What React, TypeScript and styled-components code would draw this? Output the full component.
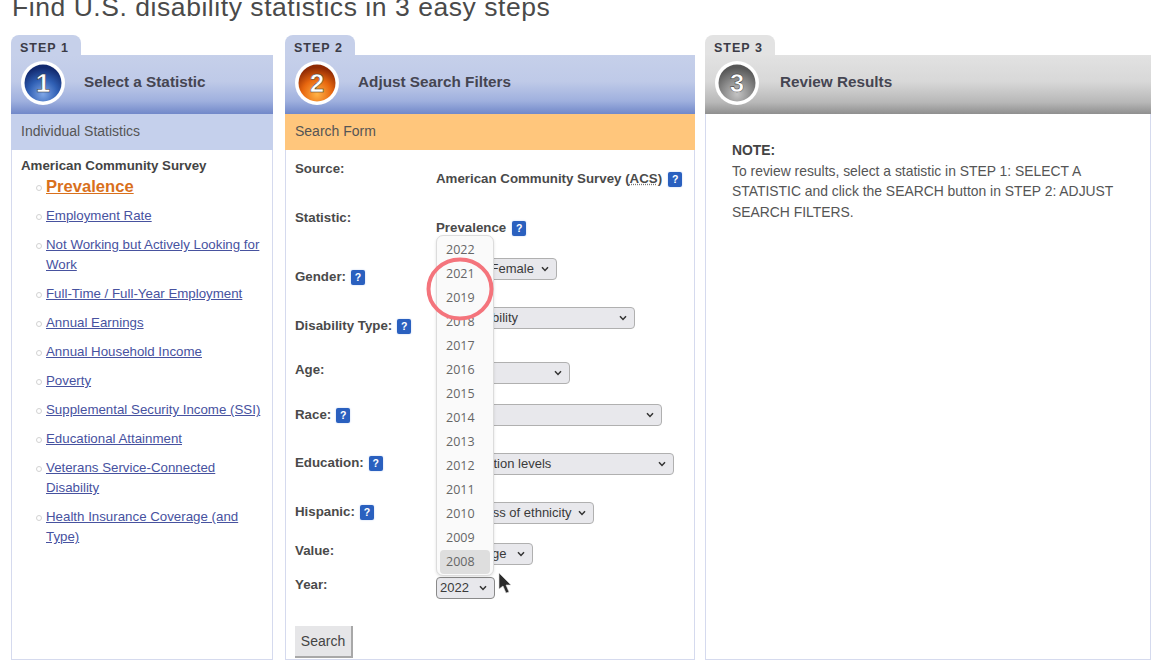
import React from "react";
import styled, { createGlobalStyle } from "styled-components";

const Global = createGlobalStyle`
  html, body { margin: 0; padding: 0; background: #fff; overflow: hidden; }
  body { font-family: "Liberation Sans", Arial, sans-serif; color: #444; }
`;

const chevron =
  "data:image/svg+xml,%3Csvg xmlns='http://www.w3.org/2000/svg' width='8' height='6' viewBox='0 0 8 6'%3E%3Cpath d='M1 1.2 L4 4.4 L7 1.2' fill='none' stroke='%23333' stroke-width='1.5'/%3E%3C/svg%3E";

const Page = styled.div`
  width: 1160px;
  height: 672px;
  overflow: hidden;
`;
const Title = styled.h1`
  margin: 0;
  height: 35px;
  padding-left: 12px;
  font-size: 26.5px;
  font-weight: 400;
  line-height: 14px;
  letter-spacing: 0.55px;
  color: #4a4a4a;
`;
const Columns = styled.div`
  display: flex;
  margin-left: 11px;
`;
const Column = styled.section<{ $w: number; $after?: number }>`
  display: flex;
  flex-direction: column;
  flex: none;
  width: ${(p) => p.$w}px;
  height: 625px;
  margin-right: ${(p) => p.$after ?? 0}px;
`;
const Tab = styled.div<{ $grey?: boolean }>`
  box-sizing: border-box;
  width: 70px;
  height: 20px;
  padding: 6px 0 0 9px;
  border-radius: 8px 8px 0 0;
  background: ${(p) => (p.$grey ? "#e3e3e3" : "#c6d0ea")};
  font-size: 12.5px;
  line-height: 14px;
  font-weight: 700;
  letter-spacing: 1px;
  color: #3b3b46;
`;
const Header = styled.header<{ $grey?: boolean; $gap?: number }>`
  display: flex;
  align-items: center;
  gap: ${(p) => p.$gap ?? 18}px;
  height: 59px;
  padding-left: 9px;
  padding-bottom: 3px;
  box-sizing: border-box;
  background: ${(p) =>
    p.$grey
      ? "linear-gradient(#e2e2e2 0%, #d8d8d8 45%, #b8b8b8 80%, #8f8f8f 100%)"
      : "linear-gradient(#c6d0ea 0%, #bfcae8 45%, #9fb0de 78%, #7188c9 100%)"};
`;
const HeaderTitle = styled.h2`
  margin: 0 0 2px;
  font-size: 15.3px;
  line-height: 18px;
  font-weight: 700;
  color: #454552;
`;
const SubBar = styled.div<{ $orange?: boolean }>`
  height: 36px;
  padding-left: 10px;
  background: ${(p) => (p.$orange ? "#ffc67c" : "#c5d0ec")};
  font-size: 14px;
  line-height: 34px;
  color: #555;
`;
const Body = styled.div`
  flex: 1;
  box-sizing: border-box;
  border: 1px solid #d5daee;
  border-top: 0;
`;
const ListBody = styled(Body)`
  padding: 8px 0 0 9px;
`;
const GroupTitle = styled.div`
  margin-bottom: 3px;
  font-size: 13.3px;
  font-weight: 700;
  line-height: 16px;
  color: #444;
`;
const List = styled.ul`
  margin: 0;
  padding: 0 8px 0 25px;
  list-style: none;
`;
const Item = styled.li<{ $active?: boolean }>`
  position: relative;
  margin-bottom: ${(p) => (p.$active ? 8 : 9)}px;
  line-height: 20px;
  font-size: 13.3px;
  &::before {
    content: "";
    position: absolute;
    left: -10.5px;
    top: 8px;
    width: 4px;
    height: 4px;
    border: 1px solid #d2d2d2;
    border-radius: 50%;
  }
`;
const StatLink = styled.a<{ $active?: boolean }>`
  color: ${(p) => (p.$active ? "#d9701c" : "#47529f")};
  font-size: ${(p) => (p.$active ? "16.6px" : "13.3px")};
  font-weight: ${(p) => (p.$active ? 700 : 400)};
  text-decoration: underline;
  cursor: pointer;
`;
const FormBody = styled(Body)`
  padding: 10px 0 0 9px;
`;
const Row = styled.div<{ $h: number }>`
  display: grid;
  grid-template-columns: 141px 1fr;
  align-items: start;
  height: ${(p) => p.$h}px;
`;
const Label = styled.div<{ $top?: number }>`
  display: flex;
  align-items: center;
  gap: 5px;
  margin-top: ${(p) => p.$top ?? 0}px;
  font-size: 13.3px;
  line-height: 16px;
  font-weight: 700;
  color: #4a4a4a;
`;
const Value = styled.div<{ $top?: number }>`
  position: relative;
  display: flex;
  align-items: center;
  gap: 6px;
  margin-top: ${(p) => p.$top ?? 0}px;
  font-size: 13.3px;
  line-height: 16px;
  font-weight: 700;
  color: #4a4a4a;
`;
const Help = styled.span`
  display: inline-flex;
  align-items: center;
  justify-content: center;
  width: 14px;
  height: 15px;
  border-radius: 2px;
  background: #2a60bf;
  box-shadow: 0 0 2px #b9cdf0;
  color: #fff;
  font-size: 10.5px;
  font-weight: 700;
  line-height: 15px;
`;
const Abbr = styled.abbr`
  text-decoration: underline dotted #777;
`;
const Select = styled.select<{ $w: number; $dark?: boolean }>`
  box-sizing: border-box;
  width: ${(p) => p.$w}px;
  height: 22px;
  padding: 0 0 1px 3px;
  appearance: none;
  border: 1px solid ${(p) => (p.$dark ? "#8a8a8a" : "#b0b0b0")};
  border-radius: 4px;
  background: #e8e8ec url("${chevron}") no-repeat right 7px center;
  font-family: "Liberation Sans", Arial, sans-serif;
  font-size: 13px;
  color: #3a3a3a;
`;
const Dropdown = styled.ul`
  position: absolute;
  left: 0;
  bottom: 23px;
  box-sizing: border-box;
  width: 58px;
  height: 341px;
  margin: 0;
  padding: 2px 3px 0;
  list-style: none;
  background: #fafafa;
  border: 1px solid #dcdcdc;
  border-radius: 7px;
  box-shadow: 0 1px 3px rgba(0, 0, 0, 0.12);
`;
const Option = styled.li<{ $hover?: boolean }>`
  height: 24px;
  padding-left: 6px;
  border-radius: 4px;
  background: ${(p) => (p.$hover ? "#dedede" : "transparent")};
  font-family: "Open Sans", sans-serif;
  font-size: 12.5px;
  font-weight: 400;
  line-height: 24px;
  color: #666;
`;
const Ring = styled.svg`
  position: absolute;
  left: -11px;
  top: -322px;
  pointer-events: none;
`;
const Pointer = styled.svg`
  position: absolute;
  left: 61px;
  top: -5px;
`;
const SearchButton = styled.button`
  box-sizing: border-box;
  width: 58px;
  height: 32px;
  padding: 0;
  border: 0;
  border-right: 2px solid #a8a8a8;
  border-bottom: 2px solid #a8a8a8;
  background: #e6e6e8;
  font-family: "Liberation Sans", Arial, sans-serif;
  font-size: 14px;
  color: #444;
`;
const NoteBody = styled(Body)`
  padding: 26px 20px 0 26px;
  font-size: 13.9px;
  line-height: 20.5px;
  color: #555;
`;
const NoteTitle = styled.strong`
  display: block;
  color: #444;
`;

function StepBadge({ n, a, b, c }: { n: number; a: string; b: string; c: string }) {
  const id = `badge${n}`;
  return (
    <svg width="46" height="46" viewBox="0 0 46 46" aria-hidden="true">
      <defs>
        <radialGradient id={id} cx="50%" cy="80%" r="72%">
          <stop offset="0%" stopColor={a} />
          <stop offset="55%" stopColor={b} />
          <stop offset="100%" stopColor={c} />
        </radialGradient>
      </defs>
      <circle cx="23" cy="23" r="22" fill="#fff" />
      <circle cx="23" cy="23" r="18.5" fill={`url(#${id})`} />
      <text
        x="23"
        y="32"
        textAnchor="middle"
        fontFamily="'Liberation Sans', sans-serif"
        fontWeight="700"
        fontSize="26"
        fill="#fff"
        stroke="#333"
        strokeWidth="0.5"
      >
        {n}
      </text>
    </svg>
  );
}

const stats: { text: string; active?: boolean }[] = [
  { text: "Prevalence", active: true },
  { text: "Employment Rate" },
  { text: "Not Working but Actively Looking for Work" },
  { text: "Full-Time / Full-Year Employment" },
  { text: "Annual Earnings" },
  { text: "Annual Household Income" },
  { text: "Poverty" },
  { text: "Supplemental Security Income (SSI)" },
  { text: "Educational Attainment" },
  { text: "Veterans Service-Connected Disability" },
  { text: "Health Insurance Coverage (and Type)" },
];

const years = [2022, 2021, 2019, 2018, 2017, 2016, 2015, 2014, 2013, 2012, 2011, 2010, 2009, 2008];

function Sel({ w, text, dark }: { w: number; text: string; dark?: boolean }) {
  return (
    <Select $w={w} $dark={dark} defaultValue={text}>
      <option>{text}</option>
    </Select>
  );
}

export default function App() {
  return (
    <Page>
      <Global />
      <Title>Find U.S. disability statistics in 3 easy steps</Title>
      <Columns>
        <Column $w={262} $after={12}>
          <Tab>STEP 1</Tab>
          <Header>
            <StepBadge n={1} a="#7fa6e6" b="#2f5fb4" c="#12296e" />
            <HeaderTitle>Select a Statistic</HeaderTitle>
          </Header>
          <SubBar>Individual Statistics</SubBar>
          <ListBody>
            <GroupTitle>American Community Survey</GroupTitle>
            <List>
              {stats.map((s) => (
                <Item key={s.text} $active={s.active}>
                  <StatLink $active={s.active}>{s.text}</StatLink>
                </Item>
              ))}
            </List>
          </ListBody>
        </Column>
        <Column $w={410} $after={10}>
          <Tab>STEP 2</Tab>
          <Header>
            <StepBadge n={2} a="#ffb347" b="#e8670f" c="#8f2a04" />
            <HeaderTitle>Adjust Search Filters</HeaderTitle>
          </Header>
          <SubBar $orange>Search Form</SubBar>
          <FormBody>
            <Row $h={49}>
              <Label $top={1}>Source:</Label>
              <Value $top={11}>
                <span>
                  American Community Survey (<Abbr>ACS</Abbr>)
                </span>
                <Help>?</Help>
              </Value>
            </Row>
            <Row $h={49}>
              <Label $top={1}>Statistic:</Label>
              <Value $top={11}>
                Prevalence <Help>?</Help>
              </Value>
            </Row>
            <Row $h={49}>
              <Label $top={11}>
                Gender: <Help>?</Help>
              </Label>
              <Value>
                <Sel w={121} text={"Male or\u00a0\u00a0Female"} />
              </Value>
            </Row>
            <Row $h={54}>
              <Label $top={11}>
                Disability Type: <Help>?</Help>
              </Label>
              <Value>
                <Sel w={199} text="Any Disability" />
              </Value>
            </Row>
            <Row $h={43}>
              <Label $top={1}>Age:</Label>
              <Value $top={1}>
                <Sel w={134} text="18-64" />
              </Value>
            </Row>
            <Row $h={49}>
              <Label $top={3}>
                Race: <Help>?</Help>
              </Label>
              <Value>
                <Sel w={226} text="All races" />
              </Value>
            </Row>
            <Row $h={49}>
              <Label $top={2}>
                Education: <Help>?</Help>
              </Label>
              <Value>
                <Sel w={238} text="All education levels" />
              </Value>
            </Row>
            <Row $h={40}>
              <Label $top={2}>
                Hispanic: <Help>?</Help>
              </Label>
              <Value>
                <Sel w={158} text="Regardless of ethnicity" />
              </Value>
            </Row>
            <Row $h={34}>
              <Label $top={1}>Value:</Label>
              <Value $top={1}>
                <Sel w={97} text="Percentage" />
              </Value>
            </Row>
            <Row $h={50}>
              <Label $top={1}>Year:</Label>
              <Value $top={1}>
                <Sel w={59} text="2022" dark />
                <Dropdown>
                  {years.map((y) => (
                    <Option key={y} $hover={y === 2008}>
                      {y}
                    </Option>
                  ))}
                </Dropdown>
                <Ring width="76" height="70" viewBox="0 0 76 70">
                  <ellipse cx="35" cy="34" rx="31.5" ry="29.5" fill="none" stroke="#f4747c" strokeWidth="4" />
                </Ring>
                <Pointer width="16" height="24" viewBox="0 0 16 24">
                  <path d="M2 1 L2 17 L6 14 L9 21 L12 20 L9 13 L14 13 Z" fill="#2b2b2b" stroke="#ddd" strokeWidth="0.6" />
                </Pointer>
              </Value>
            </Row>
            <SearchButton>Search</SearchButton>
          </FormBody>
        </Column>
        <Column $w={446}>
          <Tab $grey>STEP 3</Tab>
          <Header $grey $gap={20}>
            <StepBadge n={3} a="#c4c4c4" b="#8a8a8a" c="#575757" />
            <HeaderTitle>Review Results</HeaderTitle>
          </Header>
          <NoteBody>
            <NoteTitle>NOTE:</NoteTitle>
            To review results, select a statistic in STEP 1: SELECT A STATISTIC and click the SEARCH button in STEP 2:
            ADJUST SEARCH FILTERS.
          </NoteBody>
        </Column>
      </Columns>
    </Page>
  );
}
